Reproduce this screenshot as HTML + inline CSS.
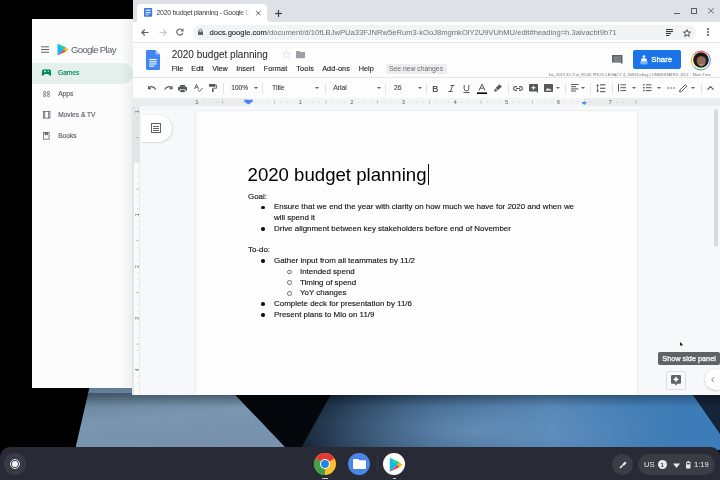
<!DOCTYPE html>
<html><head><meta charset="utf-8">
<style>
*{margin:0;padding:0;box-sizing:border-box}
html,body{width:720px;height:480px;overflow:hidden;background:#000;will-change:transform;font-family:"Liberation Sans",sans-serif}
.a{position:absolute}
.t{position:absolute;white-space:nowrap;line-height:1}
.ic{position:absolute;overflow:visible}
.doc{position:absolute;left:248px;top:191.6px;font-size:7.95px;line-height:10.75px;color:#111;white-space:nowrap;-webkit-text-stroke:0.12px #111}
.doc div{height:10.75px;position:relative}
.b1{padding-left:26px}
.b1:before{content:"";position:absolute;left:13.4px;top:3.3px;width:3.6px;height:3.6px;border-radius:50%;background:#111}
.b2{padding-left:52px}
.b2:before{content:"";position:absolute;left:39.3px;top:2.9px;width:2.5px;height:2.5px;border-radius:50%;border:0.5px solid #777}
.menu{position:absolute;top:64.6px;font-size:7.25px;color:#202124;white-space:nowrap;line-height:1;-webkit-text-stroke:0.12px #202124}
.tb{position:absolute;top:84.5px;font-size:6.5px;color:#3c4043;white-space:nowrap;line-height:1;-webkit-text-stroke:0.1px #3c4043}
.sep{position:absolute;top:83px;width:1px;height:11px;background:#e3e5e8}
.arr{position:absolute;top:87px;width:0;height:0;border-left:2px solid transparent;border-right:2px solid transparent;border-top:2.2px solid #5f6368}
</style></head><body>
<!-- wallpaper -->
<svg class="a" style="left:0;top:0" width="720" height="480" viewBox="0 0 720 480">
  <defs>
    <linearGradient id="wb" x1="0" y1="0" x2="1" y2="0">
      <stop offset="0" stop-color="#0f1c2c"/>
      <stop offset="0.3" stop-color="#2e5378"/>
      <stop offset="0.6" stop-color="#4a7eb0"/>
      <stop offset="1" stop-color="#3b7cba"/>
    </linearGradient>
    <radialGradient id="spot" cx="470" cy="430" r="150" gradientUnits="userSpaceOnUse" gradientTransform="translate(470 430) scale(1.3 0.35) translate(-470 -430)">
      <stop offset="0" stop-color="#86acd2" stop-opacity="0.55"/>
      <stop offset="1" stop-color="#86acd2" stop-opacity="0"/>
    </radialGradient>
    <linearGradient id="topsh" x1="0" y1="0" x2="0" y2="1">
      <stop offset="0" stop-color="#000" stop-opacity="0.35"/>
      <stop offset="1" stop-color="#000" stop-opacity="0"/>
    </linearGradient>
    <linearGradient id="lb" x1="0" y1="0" x2="0.3" y2="1">
      <stop offset="0" stop-color="#5d7892"/>
      <stop offset="0.55" stop-color="#7995b0"/>
      <stop offset="1" stop-color="#7892ac"/>
    </linearGradient>
  </defs>
  <rect x="0" y="0" width="720" height="480" fill="#000"/>
  <polygon points="336,385 720,385 720,450 298,450" fill="url(#wb)"/>
  <polygon points="336,385 720,385 720,450 298,450" fill="url(#spot)"/>
  <polygon points="90,385 226,385 288,450 75,450" fill="url(#lb)"/>
  <polygon points="226,385 336,385 300,450 288,450" fill="#04070b"/>
  <polygon points="686,385 720,385 720,434" fill="#15243a"/>
  <rect x="0" y="393" width="720" height="14" fill="url(#topsh)"/>
</svg>

<!-- Google Play window -->
<div class="a" style="left:32px;top:19px;width:101px;height:368.5px;background:#fcfcfd"></div>
<div class="a" style="left:32px;top:62.5px;width:101px;height:21px;background:#e4f0eb;border-radius:0 11px 11px 0"></div>
<svg class="ic" style="left:41px;top:46px" width="8" height="7" viewBox="0 0 8 7"><rect x="0" y="0.3" width="8" height="1" fill="#5f6368"/><rect x="0" y="3" width="8" height="1" fill="#5f6368"/><rect x="0" y="5.7" width="8" height="1" fill="#5f6368"/></svg>
<svg class="ic" style="left:57px;top:43px" width="12" height="13" viewBox="0 0 12 13">
  <polygon points="0.5,0.5 7,6.5 0.5,12.5" fill="#12b8ee"/>
  <polygon points="0.5,0.5 7,6.5 9,4.6" fill="#1ed27c"/>
  <polygon points="0.5,12.5 7,6.5 9,8.4" fill="#ea4335"/>
  <polygon points="9,4.6 11.5,6.5 9,8.4 7,6.5" fill="#fbbc04"/>
</svg>
<div class="t" style="left:71px;top:44.6px;font-size:9.6px;color:#5f6368;letter-spacing:-0.68px">Google Play</div>
<svg class="ic" style="left:42px;top:68.5px" width="9" height="7" viewBox="0 0 9 7"><path d="M1.5,0.5 h6 a1.5,1.5 0 0 1 1.4,1.3 l0.3,4 a0.9,0.9 0 0 1 -1.5,0.7 l-1.5,-1.5 h-3.4 l-1.5,1.5 a0.9,0.9 0 0 1 -1.5,-0.7 l0.3,-4 a1.5,1.5 0 0 1 1.4,-1.3z" fill="#01875f"/><rect x="2" y="2" width="2" height="0.8" fill="#e4f0eb"/><rect x="2.6" y="1.4" width="0.8" height="2" fill="#e4f0eb"/><circle cx="6.3" cy="2.4" r="0.6" fill="#e4f0eb"/></svg>
<div class="t" style="left:58px;top:70px;font-size:6.6px;color:#01875f;-webkit-text-stroke:0.15px #01875f">Games</div>
<svg class="ic" style="left:42.9px;top:90.9px" width="7" height="6" viewBox="0 0 7 6" fill="none" stroke="#5f6368" stroke-width="0.8"><circle cx="1.6" cy="1.5" r="1.15"/><circle cx="5.4" cy="1.5" r="1.15"/><circle cx="1.6" cy="4.5" r="1.15"/><circle cx="5.4" cy="4.5" r="1.15"/></svg>
<div class="t" style="left:58.2px;top:91px;font-size:6.6px;color:#5f6368;-webkit-text-stroke:0.15px #5f6368">Apps</div>
<svg class="ic" style="left:42.5px;top:110.9px" width="7.3" height="7.5" viewBox="0 0 7.3 7.5" fill="none" stroke="#5f6368" stroke-width="0.8"><rect x="0.4" y="0.4" width="6.5" height="6.7"/><line x1="1.7" y1="0.4" x2="1.7" y2="7.1"/><line x1="5.6" y1="0.4" x2="5.6" y2="7.1"/></svg>
<div class="t" style="left:58.2px;top:112px;font-size:6.6px;color:#5f6368;-webkit-text-stroke:0.15px #5f6368">Movies &amp; TV</div>
<svg class="ic" style="left:43.3px;top:132px" width="6.5" height="7.6" viewBox="0 0 6.5 7.6" fill="none" stroke="#5f6368" stroke-width="0.8"><rect x="0.4" y="0.4" width="5.7" height="6.8"/><path d="M2,0.4 v2.6 l1.25,-0.7 l1.25,0.7 v-2.6" fill="#5f6368"/></svg>
<div class="t" style="left:58.2px;top:133px;font-size:6.6px;color:#5f6368;-webkit-text-stroke:0.15px #5f6368">Books</div>
<!-- shadow of chrome on play -->
<div class="a" style="left:121px;top:19px;width:12px;height:368.5px;background:linear-gradient(to right,rgba(0,0,0,0),rgba(0,0,0,0.06))"></div>

<!-- Chrome window -->
<div class="a" style="left:133px;top:0;width:587px;height:395px;background:#dee1e6"></div>
<!-- tab -->
<div class="a" style="left:137px;top:17px;width:134px;height:5px;background:#fff"></div>
<div class="a" style="left:267px;top:13px;width:8px;height:9px;background:#dee1e6;border-radius:0 0 0 4px"></div>
<div class="a" style="left:137px;top:4px;width:130px;height:18.5px;background:#fff;border-radius:4px 4px 0 0"></div>
<svg class="ic" style="left:144px;top:8.3px" width="8.2" height="8.8" viewBox="0 0 8.2 8.8"><rect x="0" y="0" width="8.2" height="8.8" rx="0.8" fill="#3d7be6"/><rect x="1.6" y="1.6" width="5" height="1.3" fill="#dfe9fb"/><rect x="1.6" y="4" width="5" height="1.3" fill="#dfe9fb"/><rect x="1.6" y="6.3" width="3" height="0.9" fill="#dfe9fb"/></svg>
<div class="t" style="left:156.5px;top:9.4px;font-size:7px;color:#3c4043;letter-spacing:-0.3px;width:95px;overflow:hidden">2020 budget planning - Google Docs</div>
<div class="a" style="left:240px;top:6px;width:13px;height:13px;background:linear-gradient(to right,rgba(255,255,255,0),#fff 80%)"></div>
<svg class="ic" style="left:256px;top:11px" width="4.6" height="4.4" viewBox="0 0 4.6 4.4" stroke="#4a4e52" stroke-width="0.9"><line x1="0.2" y1="0.2" x2="4.4" y2="4.2"/><line x1="4.4" y1="0.2" x2="0.2" y2="4.2"/></svg>
<svg class="ic" style="left:275px;top:10px" width="7" height="7" viewBox="0 0 7 7" stroke="#3c4043" stroke-width="1.2"><line x1="3.5" y1="0" x2="3.5" y2="7"/><line x1="0" y1="3.5" x2="7" y2="3.5"/></svg>
<!-- window controls -->
<div class="a" style="left:674px;top:13.2px;width:6px;height:1px;background:#5a5e62"></div>
<div class="a" style="left:691.2px;top:8px;width:5.8px;height:6px;border:1px solid #5a5e62;border-radius:0.5px"></div>
<svg class="ic" style="left:708.3px;top:8.2px" width="6" height="5.6" viewBox="0 0 6 5.6" stroke="#5a5e62" stroke-width="0.9"><line x1="0.2" y1="0.2" x2="5.8" y2="5.4"/><line x1="5.8" y1="0.2" x2="0.2" y2="5.4"/></svg>
<!-- toolbar -->
<div class="a" style="left:133px;top:21.6px;width:587px;height:21px;background:#fff;border-bottom:1px solid #e3e5e8"></div>
<svg class="ic" style="left:141px;top:28.5px" width="8" height="7" viewBox="0 0 8 7" fill="none" stroke="#5f6368" stroke-width="1.1"><line x1="0.8" y1="3.5" x2="7.5" y2="3.5"/><polyline points="3.8,0.5 0.8,3.5 3.8,6.5"/></svg>
<svg class="ic" style="left:158.5px;top:28.5px" width="8" height="7" viewBox="0 0 8 7" fill="none" stroke="#c4c7cb" stroke-width="1.1"><line x1="0.5" y1="3.5" x2="7.2" y2="3.5"/><polyline points="4.2,0.5 7.2,3.5 4.2,6.5"/></svg>
<svg class="ic" style="left:175.5px;top:28px" width="8" height="8" viewBox="0 0 8 8" fill="none" stroke="#5f6368" stroke-width="1.1"><path d="M6.6,2.6 A3.1,3.1 0 1 0 6.8,5"/><polygon points="7.5,0.5 7.5,3.4 4.6,3.4" fill="#5f6368" stroke="none"/></svg>
<div class="a" style="left:192.5px;top:24.5px;width:503.5px;height:15px;background:#f1f3f4;border-radius:7.5px"></div>
<svg class="ic" style="left:198px;top:28.5px" width="5" height="6" viewBox="0 0 5 6"><rect x="0" y="2.5" width="5" height="3.5" rx="0.5" fill="#5f6368"/><path d="M1,2.6 V1.8 a1.5,1.5 0 0 1 3,0 V2.6" fill="none" stroke="#5f6368" stroke-width="0.9"/></svg>
<div class="t" style="left:209.5px;top:28.8px;font-size:7.6px;color:#202124;-webkit-text-stroke:0.1px #202124">docs.google.com<span style="color:#6f7378;-webkit-text-stroke:0">/document/d/10fLBJwPUa33FJNRw5eRum3-kOoJ8mgmkOlY2U9VUhMU/edit#heading=h.3aivacbt9b71</span></div>
<svg class="ic" style="left:665.5px;top:29px" width="7" height="7" viewBox="0 0 7 7" fill="#3c4043"><rect x="0" y="0" width="7" height="1.1"/><rect x="0" y="2" width="7" height="1.1"/><rect x="0" y="4" width="5" height="1.1"/><rect x="0" y="6" width="3.5" height="1"/></svg>
<svg class="ic" style="left:682.5px;top:28.5px" width="8" height="8" viewBox="0 0 8 8" fill="none" stroke="#3c4043" stroke-width="0.9"><polygon points="4,0.6 5,3 7.6,3.1 5.6,4.8 6.3,7.4 4,6 1.7,7.4 2.4,4.8 0.4,3.1 3,3"/></svg>
<svg class="ic" style="left:707px;top:28px" width="2" height="8" viewBox="0 0 2 8" fill="#3c4043"><circle cx="1" cy="1" r="0.9"/><circle cx="1" cy="4" r="0.9"/><circle cx="1" cy="7" r="0.9"/></svg>

<!-- docs header -->
<div class="a" style="left:133px;top:42.6px;width:587px;height:35.2px;background:#fdfdfe;border-bottom:1px solid #e3e5e8"></div>
<svg class="ic" style="left:145.5px;top:49.5px" width="14" height="20" viewBox="0 0 14 20"><path d="M1.3,0 H9.5 L14,4.5 V18.7 a1.3,1.3 0 0 1 -1.3,1.3 H1.3 A1.3,1.3 0 0 1 0,18.7 V1.3 A1.3,1.3 0 0 1 1.3,0z" fill="#4285f4"/><path d="M9.5,0 V4.5 H14z" fill="#a1c2fa"/><rect x="3.2" y="9" width="7.6" height="1.1" fill="#fff"/><rect x="3.2" y="11.2" width="7.6" height="1.1" fill="#fff"/><rect x="3.2" y="13.4" width="7.6" height="1.1" fill="#fff"/><rect x="3.2" y="15.6" width="5" height="1.1" fill="#fff"/></svg>
<div class="t" style="left:171.7px;top:49.8px;font-size:10px;color:#202124">2020 budget planning</div>
<svg class="ic" style="left:281.5px;top:50px" width="8.5" height="8.5" viewBox="0 0 8 8" fill="none" stroke="#e0e2e5" stroke-width="0.8"><polygon points="4,0.6 5,3 7.6,3.1 5.6,4.8 6.3,7.4 4,6 1.7,7.4 2.4,4.8 0.4,3.1 3,3"/></svg>
<svg class="ic" style="left:296.3px;top:50.8px" width="9" height="7.2" viewBox="0 0 9 7.2"><path d="M0.8,0 H3.5 L4.4,0.9 H8.2 A0.8,0.8 0 0 1 9,1.7 V6.4 A0.8,0.8 0 0 1 8.2,7.2 H0.8 A0.8,0.8 0 0 1 0,6.4 V0.8 A0.8,0.8 0 0 1 0.8,0z" fill="#9aa0a6"/></svg>
<div class="menu" style="left:171.7px">File</div>
<div class="menu" style="left:191.3px">Edit</div>
<div class="menu" style="left:212.2px">View</div>
<div class="menu" style="left:236.3px">Insert</div>
<div class="menu" style="left:263.7px;letter-spacing:0.1px">Format</div>
<div class="menu" style="left:296.3px;letter-spacing:0.15px">Tools</div>
<div class="menu" style="left:322.2px;letter-spacing:0.1px">Add-ons</div>
<div class="menu" style="left:358.8px">Help</div>
<div class="a" style="left:386px;top:64px;width:60.5px;height:10px;background:#ededee;border-radius:1px"></div>
<div class="t" style="left:389px;top:66px;font-size:6.8px;color:#6b6f73">See new changes</div>
<!-- right header -->
<svg class="ic" style="left:611.7px;top:54.5px" width="10.5" height="9.5" viewBox="0 0 10.5 9.5"><path d="M0,0 H10.5 V9.5 L8.5,7.5 H0z" fill="#5f6368"/><rect x="1.5" y="1.6" width="7.5" height="1" fill="#fff" opacity="0.35"/><rect x="1.5" y="3.4" width="7.5" height="1" fill="#fff" opacity="0.35"/><rect x="1.5" y="5.2" width="7.5" height="1" fill="#fff" opacity="0.35"/></svg>
<div class="a" style="left:633.3px;top:50px;width:47.5px;height:19.2px;background:#1a73e8;border-radius:2px"></div>
<svg class="ic" style="left:640px;top:54.8px" width="8" height="10" viewBox="0 0 8 10"><circle cx="3.9" cy="1.5" r="1.3" fill="#fff"/><path d="M1,6.6 V4.8 a1.6,1.6 0 0 1 1.6,-1.6 h2.6 a1.6,1.6 0 0 1 1.6,1.6 V6.6z" fill="#fff"/><path d="M0.2,6.4 h7.4 v1.8 a1.3,1.3 0 0 1 -1.3,1.3 h-4.8 a1.3,1.3 0 0 1 -1.3,-1.3z" fill="#fff" opacity="0.45"/></svg>
<div class="t" style="left:651.3px;top:55.7px;font-size:7.8px;color:#fff;-webkit-text-stroke:0.3px #fff">Share</div>
<svg class="ic" style="left:689.5px;top:48.8px" width="22" height="22" viewBox="0 0 22 22">
  <path d="M3.2,6 A9.9,9.9 0 0 1 18.8,6" stroke="#ea4335" stroke-width="1" fill="none"/>
  <path d="M18.8,6 A9.9,9.9 0 0 1 15.5,19.8" stroke="#4285f4" stroke-width="1" fill="none"/>
  <path d="M15.5,19.8 A9.9,9.9 0 0 1 3.5,17.5" stroke="#34a853" stroke-width="1" fill="none"/>
  <path d="M3.5,17.5 A9.9,9.9 0 0 1 3.2,6" stroke="#fbbc04" stroke-width="1" fill="none"/>
  <circle cx="11" cy="11" r="7.8" fill="#221a17"/>
  <ellipse cx="11.3" cy="12" rx="4.6" ry="5.4" fill="#8e6a58"/>
  <path d="M6,9.5 Q6.2,4.5 11,4.3 Q16,4.5 16.2,9.5 Q14.5,7 11,7.2 Q7.5,7 6,9.5z" fill="#1a1412"/>
  <ellipse cx="11.5" cy="15.5" rx="2" ry="0.8" fill="#d8b8a8" opacity="0.6"/>
</svg>
<div class="t" style="left:548.8px;top:72.5px;font-size:4px;color:#70757a;letter-spacing:0.03px">kix_2019.42-Tue_RC06 PROD LEGACY 4_3081Debug | UNMIGRATED J2CL · Main Tree</div>

<!-- docs toolbar -->
<div class="a" style="left:133px;top:78px;width:587px;height:20px;background:#fdfdfe"></div>
<svg class="ic" style="left:148px;top:84.5px" width="8.5" height="5.5" viewBox="0 0 8.5 5.5" fill="none" stroke="#54585d" stroke-width="1.2"><path d="M1.2,2.5 Q4.5,0 8,4.5"/><polygon points="0,0.5 0,4.2 3.4,4.2" fill="#54585d" stroke="none"/></svg>
<svg class="ic" style="left:163.5px;top:84.5px" width="8.5" height="5.5" viewBox="0 0 8.5 5.5" fill="none" stroke="#54585d" stroke-width="1.2"><path d="M7.3,2.5 Q4,0 0.5,4.5"/><polygon points="8.5,0.5 8.5,4.2 5.1,4.2" fill="#54585d" stroke="none"/></svg>
<svg class="ic" style="left:178px;top:84.5px" width="9" height="7.5" viewBox="0 0 9 7.5"><rect x="2" y="0" width="5" height="1.8" fill="#54585d"/><rect x="0" y="1.8" width="9" height="3.9" rx="0.8" fill="#54585d"/><rect x="2" y="4.4" width="5" height="3.1" fill="#54585d" stroke="#fdfdfe" stroke-width="0.6"/></svg>
<svg class="ic" style="left:193.5px;top:84.2px" width="9" height="8" viewBox="0 0 9 8" fill="none" stroke="#54585d" stroke-width="0.9"><path d="M0.5,5 L2.5,0.3 L4.5,5 M1.3,3.3 H3.7"/><path d="M3.8,6 L5.5,7.5 L8.5,4"/></svg>
<svg class="ic" style="left:209px;top:84.2px" width="8" height="8" viewBox="0 0 8 8" fill="#54585d"><rect x="0" y="0" width="6.5" height="2.8" rx="0.5"/><path d="M6.5,1.2 H7.6 V4.2 H3.8 V5" fill="none" stroke="#54585d" stroke-width="0.9"/><rect x="3" y="4.8" width="1.6" height="3.2"/></svg>
<div class="sep" style="left:222.5px"></div>
<div class="tb" style="left:231.3px">100%</div>
<div class="arr" style="left:254px"></div>
<div class="sep" style="left:262.4px"></div>
<div class="tb" style="left:272px;font-size:6.8px">Title</div>
<div class="arr" style="left:315px"></div>
<div class="sep" style="left:324.9px"></div>
<div class="tb" style="left:333.2px;font-size:6.8px">Arial</div>
<div class="arr" style="left:377px"></div>
<div class="sep" style="left:385.3px"></div>
<div class="tb" style="left:393.9px;font-size:6.8px">26</div>
<div class="arr" style="left:417.5px"></div>
<div class="sep" style="left:425.8px"></div>
<div class="t" style="left:432.3px;top:84.7px;font-size:8.5px;font-weight:bold;color:#54585d">B</div>
<svg class="ic" style="left:447.5px;top:84.5px" width="7" height="7" viewBox="0 0 7 7" fill="none" stroke="#54585d" stroke-width="1"><path d="M2.5,0.5 H6.5 M0.5,6.5 H4.5 M4.6,0.5 L2.4,6.5"/></svg>
<svg class="ic" style="left:462.5px;top:84.5px" width="7" height="8" viewBox="0 0 7 8" fill="none" stroke="#54585d" stroke-width="1"><path d="M1.2,0 V3.6 a2.3,2.3 0 0 0 4.6,0 V0"/><line x1="0.5" y1="7.5" x2="6.5" y2="7.5"/></svg>
<svg class="ic" style="left:477px;top:84.3px" width="10" height="10" viewBox="0 0 10 10" fill="none" stroke="#54585d" stroke-width="1"><path d="M2,6.5 L5,0.2 L8,6.5 M3.2,4.2 H6.8"/><rect x="0" y="8.4" width="10" height="1.6" fill="#000" stroke="none"/></svg>
<svg class="ic" style="left:494px;top:84px" width="8" height="8" viewBox="0 0 8 8" fill="#54585d"><path d="M5.5,0.2 L7.8,2.5 L4,6.3 L1.7,4z"/><path d="M1.3,4.6 L3.4,6.7 L2.2,7.4 L0.2,7.6 L0.6,5.6z"/></svg>
<div class="sep" style="left:508.2px"></div>
<svg class="ic" style="left:513px;top:85.5px" width="10" height="5" viewBox="0 0 10 5" fill="none" stroke="#54585d" stroke-width="1.1"><path d="M4,0.6 H2.5 a1.9,1.9 0 0 0 0,3.8 H4 M6,0.6 H7.5 a1.9,1.9 0 0 1 0,3.8 H6 M3,2.5 H7"/></svg>
<svg class="ic" style="left:528.8px;top:83.8px" width="9" height="9" viewBox="0 0 9 9"><path d="M0.8,0 H8.2 A0.8,0.8 0 0 1 9,0.8 V9 L7.5,7.5 H0.8 A0.8,0.8 0 0 1 0,6.7 V0.8 A0.8,0.8 0 0 1 0.8,0z" fill="#54585d"/><path d="M4.5,1.7 V5.8 M2.4,3.75 H6.6" stroke="#fff" stroke-width="1.1"/></svg>
<svg class="ic" style="left:543.7px;top:83.8px" width="9" height="8" viewBox="0 0 9 8"><rect x="0" y="0" width="9" height="8" rx="0.7" fill="#54585d"/><polygon points="1.5,6.5 3.5,4 5,5.5 6,4.5 7.5,6.5" fill="#fdfdfe"/></svg>
<div class="arr" style="left:555.5px"></div>
<div class="sep" style="left:564.5px"></div>
<svg class="ic" style="left:570.8px;top:84.3px" width="7.5" height="7.5" viewBox="0 0 7.5 7.5" fill="#54585d"><rect x="0" y="0" width="7.5" height="1"/><rect x="0" y="2.2" width="5" height="1"/><rect x="0" y="4.4" width="7.5" height="1"/><rect x="0" y="6.5" width="5" height="1"/></svg>
<div class="arr" style="left:581px"></div>
<div class="sep" style="left:590.3px"></div>
<svg class="ic" style="left:596.3px;top:83.8px" width="9.5" height="8.5" viewBox="0 0 9.5 8.5" fill="#54585d"><rect x="4" y="0.3" width="5.5" height="1.1"/><rect x="4" y="3.7" width="5.5" height="1.1"/><rect x="4" y="7.1" width="5.5" height="1.1"/><polygon points="0.2,2 1.6,0 3,2"/><polygon points="0.2,6.5 1.6,8.5 3,6.5"/><rect x="1.2" y="1.5" width="0.8" height="5.5"/></svg>
<div class="sep" style="left:611.7px"></div>
<svg class="ic" style="left:618px;top:84px" width="8" height="7.5" viewBox="0 0 8 7.5" fill="#54585d"><rect x="2.5" y="0.3" width="5.5" height="1"/><rect x="2.5" y="3.2" width="5.5" height="1"/><rect x="2.5" y="6.1" width="5.5" height="1"/><rect x="0" y="0" width="1" height="7.5"/></svg>
<div class="arr" style="left:632px"></div>
<svg class="ic" style="left:642.8px;top:84px" width="8.5" height="7.5" viewBox="0 0 8.5 7.5" fill="#54585d"><rect x="2.8" y="0.3" width="5.7" height="1"/><rect x="2.8" y="3.2" width="5.7" height="1"/><rect x="2.8" y="6.1" width="5.7" height="1"/><rect x="0" y="0.1" width="1.5" height="1.4"/><rect x="0" y="3" width="1.5" height="1.4"/><rect x="0" y="5.9" width="1.5" height="1.4"/></svg>
<div class="arr" style="left:657px"></div>
<svg class="ic" style="left:667.3px;top:87.3px" width="8" height="2" viewBox="0 0 8 2" fill="#54585d"><circle cx="1" cy="1" r="0.8"/><circle cx="4" cy="1" r="0.8"/><circle cx="7" cy="1" r="0.8"/></svg>
<svg class="ic" style="left:678.8px;top:83.6px" width="8.5" height="8.5" viewBox="0 0 8.5 8.5" fill="none" stroke="#54585d" stroke-width="1"><path d="M6.3,0.7 L7.8,2.2 L2.4,7.6 L0.6,7.9 L0.9,6.1z"/></svg>
<div class="arr" style="left:690.5px"></div>
<div class="sep" style="left:700.5px"></div>
<svg class="ic" style="left:706.6px;top:86px" width="7" height="4" viewBox="0 0 7 4" fill="none" stroke="#54585d" stroke-width="1.2"><polyline points="0.5,3.6 3.5,0.6 6.5,3.6"/></svg>

<!-- ruler -->
<div class="a" style="left:133px;top:98px;width:587px;height:8px;background:#eaecee"></div>
<div class="a" style="left:248px;top:98px;width:336px;height:8px;background:#f3f4f5"></div>
<svg class="ic" style="left:133px;top:98px" width="587" height="8" viewBox="0 0 587 8">
<text x="63.85" y="6.2" font-size="6" text-anchor="middle" fill="#5f6368" font-family="Liberation Sans">1</text>
<rect x="69.96" y="3.7" width="0.7" height="0.7" fill="#a0a4a8"/>
<rect x="76.41" y="3.7" width="0.7" height="0.7" fill="#a0a4a8"/>
<rect x="82.87" y="3.7" width="0.7" height="0.7" fill="#a0a4a8"/>
<rect x="89.33" y="2.5" width="0.7" height="3" fill="#a0a4a8"/>
<rect x="95.78" y="3.7" width="0.7" height="0.7" fill="#a0a4a8"/>
<rect x="102.24" y="3.7" width="0.7" height="0.7" fill="#a0a4a8"/>
<rect x="108.69" y="3.7" width="0.7" height="0.7" fill="#a0a4a8"/>
<rect x="121.61" y="3.7" width="0.7" height="0.7" fill="#a0a4a8"/>
<rect x="128.06" y="3.7" width="0.7" height="0.7" fill="#a0a4a8"/>
<rect x="134.52" y="3.7" width="0.7" height="0.7" fill="#a0a4a8"/>
<rect x="140.97" y="2.5" width="0.7" height="3" fill="#a0a4a8"/>
<rect x="147.43" y="3.7" width="0.7" height="0.7" fill="#a0a4a8"/>
<rect x="153.89" y="3.7" width="0.7" height="0.7" fill="#a0a4a8"/>
<rect x="160.34" y="3.7" width="0.7" height="0.7" fill="#a0a4a8"/>
<text x="167.15" y="6.2" font-size="6" text-anchor="middle" fill="#5f6368" font-family="Liberation Sans">1</text>
<rect x="173.26" y="3.7" width="0.7" height="0.7" fill="#a0a4a8"/>
<rect x="179.71" y="3.7" width="0.7" height="0.7" fill="#a0a4a8"/>
<rect x="186.17" y="3.7" width="0.7" height="0.7" fill="#a0a4a8"/>
<rect x="192.63" y="2.5" width="0.7" height="3" fill="#a0a4a8"/>
<rect x="199.08" y="3.7" width="0.7" height="0.7" fill="#a0a4a8"/>
<rect x="205.54" y="3.7" width="0.7" height="0.7" fill="#a0a4a8"/>
<rect x="211.99" y="3.7" width="0.7" height="0.7" fill="#a0a4a8"/>
<text x="218.80" y="6.2" font-size="6" text-anchor="middle" fill="#5f6368" font-family="Liberation Sans">2</text>
<rect x="224.91" y="3.7" width="0.7" height="0.7" fill="#a0a4a8"/>
<rect x="231.36" y="3.7" width="0.7" height="0.7" fill="#a0a4a8"/>
<rect x="237.82" y="3.7" width="0.7" height="0.7" fill="#a0a4a8"/>
<rect x="244.28" y="2.5" width="0.7" height="3" fill="#a0a4a8"/>
<rect x="250.73" y="3.7" width="0.7" height="0.7" fill="#a0a4a8"/>
<rect x="257.19" y="3.7" width="0.7" height="0.7" fill="#a0a4a8"/>
<rect x="263.64" y="3.7" width="0.7" height="0.7" fill="#a0a4a8"/>
<text x="270.45" y="6.2" font-size="6" text-anchor="middle" fill="#5f6368" font-family="Liberation Sans">3</text>
<rect x="276.56" y="3.7" width="0.7" height="0.7" fill="#a0a4a8"/>
<rect x="283.01" y="3.7" width="0.7" height="0.7" fill="#a0a4a8"/>
<rect x="289.47" y="3.7" width="0.7" height="0.7" fill="#a0a4a8"/>
<rect x="295.92" y="2.5" width="0.7" height="3" fill="#a0a4a8"/>
<rect x="302.38" y="3.7" width="0.7" height="0.7" fill="#a0a4a8"/>
<rect x="308.84" y="3.7" width="0.7" height="0.7" fill="#a0a4a8"/>
<rect x="315.29" y="3.7" width="0.7" height="0.7" fill="#a0a4a8"/>
<text x="322.10" y="6.2" font-size="6" text-anchor="middle" fill="#5f6368" font-family="Liberation Sans">4</text>
<rect x="328.21" y="3.7" width="0.7" height="0.7" fill="#a0a4a8"/>
<rect x="334.66" y="3.7" width="0.7" height="0.7" fill="#a0a4a8"/>
<rect x="341.12" y="3.7" width="0.7" height="0.7" fill="#a0a4a8"/>
<rect x="347.57" y="2.5" width="0.7" height="3" fill="#a0a4a8"/>
<rect x="354.03" y="3.7" width="0.7" height="0.7" fill="#a0a4a8"/>
<rect x="360.49" y="3.7" width="0.7" height="0.7" fill="#a0a4a8"/>
<rect x="366.94" y="3.7" width="0.7" height="0.7" fill="#a0a4a8"/>
<text x="373.75" y="6.2" font-size="6" text-anchor="middle" fill="#5f6368" font-family="Liberation Sans">5</text>
<rect x="379.86" y="3.7" width="0.7" height="0.7" fill="#a0a4a8"/>
<rect x="386.31" y="3.7" width="0.7" height="0.7" fill="#a0a4a8"/>
<rect x="392.77" y="3.7" width="0.7" height="0.7" fill="#a0a4a8"/>
<rect x="399.23" y="2.5" width="0.7" height="3" fill="#a0a4a8"/>
<rect x="405.68" y="3.7" width="0.7" height="0.7" fill="#a0a4a8"/>
<rect x="412.14" y="3.7" width="0.7" height="0.7" fill="#a0a4a8"/>
<rect x="418.59" y="3.7" width="0.7" height="0.7" fill="#a0a4a8"/>
<text x="425.40" y="6.2" font-size="6" text-anchor="middle" fill="#5f6368" font-family="Liberation Sans">6</text>
<rect x="431.51" y="3.7" width="0.7" height="0.7" fill="#a0a4a8"/>
<rect x="437.96" y="3.7" width="0.7" height="0.7" fill="#a0a4a8"/>
<rect x="444.42" y="3.7" width="0.7" height="0.7" fill="#a0a4a8"/>
<rect x="450.87" y="2.5" width="0.7" height="3" fill="#a0a4a8"/>
<rect x="457.33" y="3.7" width="0.7" height="0.7" fill="#a0a4a8"/>
<rect x="463.79" y="3.7" width="0.7" height="0.7" fill="#a0a4a8"/>
<rect x="470.24" y="3.7" width="0.7" height="0.7" fill="#a0a4a8"/>
<text x="477.05" y="6.2" font-size="6" text-anchor="middle" fill="#5f6368" font-family="Liberation Sans">7</text>
<rect x="483.16" y="3.7" width="0.7" height="0.7" fill="#a0a4a8"/>
<rect x="489.61" y="3.7" width="0.7" height="0.7" fill="#a0a4a8"/>
<rect x="496.07" y="3.7" width="0.7" height="0.7" fill="#a0a4a8"/>
<rect x="502.52" y="2.5" width="0.7" height="3" fill="#a0a4a8"/>
<path d="M111.20,1.8 h8.6 v1.6 l-4.3,3.2 l-4.3,-3.2z" fill="#4285f4"/>
<path d="M448.20,4 h6 l-3,3z" fill="#4285f4"/>
</svg>

<!-- canvas -->
<div class="a" style="left:133px;top:106px;width:587px;height:289px;background:#f7f8f9"></div>
<div class="a" style="left:133.7px;top:106px;width:6.6px;height:289px;background:#fbfbfc;border-right:1px solid #e6e8ea"></div>
<div class="a" style="left:132.2px;top:106px;width:1.6px;height:289px;background:#e3e4e6"></div>
<div class="a" style="left:133.7px;top:106px;width:6.6px;height:57.3px;background:#e4e6e8"></div>
<svg class="ic" style="left:133.7px;top:106px" width="7" height="288" viewBox="0 0 7 288">
<text transform="translate(4.9,5.65) rotate(-90)" font-size="5" text-anchor="middle" fill="#5f6368" font-family="Liberation Sans">1</text>
<rect x="3" y="11.76" width="0.7" height="0.7" fill="#a0a4a8"/>
<rect x="3" y="18.21" width="0.7" height="0.7" fill="#a0a4a8"/>
<rect x="3" y="24.67" width="0.7" height="0.7" fill="#a0a4a8"/>
<rect x="1.8" y="31.13" width="3" height="0.7" fill="#a0a4a8"/>
<rect x="3" y="37.58" width="0.7" height="0.7" fill="#a0a4a8"/>
<rect x="3" y="44.04" width="0.7" height="0.7" fill="#a0a4a8"/>
<rect x="3" y="50.49" width="0.7" height="0.7" fill="#a0a4a8"/>
<rect x="3" y="63.41" width="0.7" height="0.7" fill="#a0a4a8"/>
<rect x="3" y="69.86" width="0.7" height="0.7" fill="#a0a4a8"/>
<rect x="3" y="76.32" width="0.7" height="0.7" fill="#a0a4a8"/>
<rect x="1.8" y="82.78" width="3" height="0.7" fill="#a0a4a8"/>
<rect x="3" y="89.23" width="0.7" height="0.7" fill="#a0a4a8"/>
<rect x="3" y="95.69" width="0.7" height="0.7" fill="#a0a4a8"/>
<rect x="3" y="102.14" width="0.7" height="0.7" fill="#a0a4a8"/>
<text transform="translate(4.9,108.95) rotate(-90)" font-size="5" text-anchor="middle" fill="#5f6368" font-family="Liberation Sans">1</text>
<rect x="3" y="115.06" width="0.7" height="0.7" fill="#a0a4a8"/>
<rect x="3" y="121.51" width="0.7" height="0.7" fill="#a0a4a8"/>
<rect x="3" y="127.97" width="0.7" height="0.7" fill="#a0a4a8"/>
<rect x="1.8" y="134.43" width="3" height="0.7" fill="#a0a4a8"/>
<rect x="3" y="140.88" width="0.7" height="0.7" fill="#a0a4a8"/>
<rect x="3" y="147.34" width="0.7" height="0.7" fill="#a0a4a8"/>
<rect x="3" y="153.79" width="0.7" height="0.7" fill="#a0a4a8"/>
<text transform="translate(4.9,160.60) rotate(-90)" font-size="5" text-anchor="middle" fill="#5f6368" font-family="Liberation Sans">2</text>
<rect x="3" y="166.71" width="0.7" height="0.7" fill="#a0a4a8"/>
<rect x="3" y="173.16" width="0.7" height="0.7" fill="#a0a4a8"/>
<rect x="3" y="179.62" width="0.7" height="0.7" fill="#a0a4a8"/>
<rect x="1.8" y="186.08" width="3" height="0.7" fill="#a0a4a8"/>
<rect x="3" y="192.53" width="0.7" height="0.7" fill="#a0a4a8"/>
<rect x="3" y="198.99" width="0.7" height="0.7" fill="#a0a4a8"/>
<rect x="3" y="205.44" width="0.7" height="0.7" fill="#a0a4a8"/>
<text transform="translate(4.9,212.25) rotate(-90)" font-size="5" text-anchor="middle" fill="#5f6368" font-family="Liberation Sans">3</text>
<rect x="3" y="218.36" width="0.7" height="0.7" fill="#a0a4a8"/>
<rect x="3" y="224.81" width="0.7" height="0.7" fill="#a0a4a8"/>
<rect x="3" y="231.27" width="0.7" height="0.7" fill="#a0a4a8"/>
<rect x="1.8" y="237.73" width="3" height="0.7" fill="#a0a4a8"/>
<rect x="3" y="244.18" width="0.7" height="0.7" fill="#a0a4a8"/>
<rect x="3" y="250.64" width="0.7" height="0.7" fill="#a0a4a8"/>
<rect x="3" y="257.09" width="0.7" height="0.7" fill="#a0a4a8"/>
<text transform="translate(4.9,263.90) rotate(-90)" font-size="5" text-anchor="middle" fill="#5f6368" font-family="Liberation Sans">4</text>
<rect x="3" y="270.01" width="0.7" height="0.7" fill="#a0a4a8"/>
<rect x="3" y="276.46" width="0.7" height="0.7" fill="#a0a4a8"/>
<rect x="3" y="282.92" width="0.7" height="0.7" fill="#a0a4a8"/>
</svg>
<div class="a" style="left:196px;top:111px;width:440.5px;height:284px;background:#fdfdfe;box-shadow:0 0 1.5px rgba(0,0,0,0.18)"></div>
<div class="a" style="left:140.5px;top:115px;width:31px;height:26.5px;background:#fff;border-radius:0 13.25px 13.25px 0;box-shadow:0.5px 0.5px 1.5px rgba(0,0,0,0.2)"></div>
<svg class="ic" style="left:151px;top:123px" width="10" height="10" viewBox="0 0 10 10" shape-rendering="crispEdges"><rect x="0" y="0" width="10" height="1" fill="#5f6368"/><rect x="0" y="9" width="10" height="1" fill="#5f6368"/><rect x="0" y="0" width="1" height="10" fill="#5f6368"/><rect x="9" y="0" width="1" height="10" fill="#5f6368"/><rect x="2" y="3" width="6" height="1" fill="#5f6368"/><rect x="2" y="5" width="6" height="1" fill="#5f6368"/><rect x="2" y="7" width="6" height="1" fill="#5f6368"/></svg>
<!-- scrollbar -->
<div class="a" style="left:713.5px;top:108.5px;width:4.5px;height:138px;background:#d9dadc;border-radius:2.25px"></div>

<!-- doc content -->
<div class="t" style="left:247.6px;top:166.2px;font-size:18.6px;color:#000">2020 budget planning</div>
<div class="a" style="left:428px;top:163.5px;width:0.9px;height:21.5px;background:#111"></div>
<div class="doc">
  <div>Goal:</div>
  <div class="b1">Ensure that we end the year with clarity on how much we have for 2020 and when we</div>
  <div style="padding-left:26px">will spend it</div>
  <div class="b1">Drive alignment between key stakeholders before end of November</div>
  <div></div>
  <div>To-do:</div>
  <div class="b1">Gather input from all teammates by 11/2</div>
  <div class="b2">Intended spend</div>
  <div class="b2">Timing of spend</div>
  <div class="b2">YoY changes</div>
  <div class="b1">Complete deck for presentation by 11/6</div>
  <div class="b1">Present plans to Mio on 11/9</div>
</div>

<!-- bottom-right controls -->
<svg class="ic" style="left:679.5px;top:342px" width="3" height="4.5" viewBox="0 0 3 4.5"><polygon points="0,0 0,4 1,3 2,4.3 2.6,4 1.8,2.8 3,2.8" fill="#222"/></svg>
<div class="a" style="left:657.9px;top:352.2px;width:62.1px;height:12.5px;background:#5f6266;border-radius:2px"></div>
<div class="t" style="left:662.3px;top:355.3px;font-size:7.3px;color:#fff;-webkit-text-stroke:0.25px #fff">Show side panel</div>
<div class="a" style="left:665.5px;top:370.5px;width:20px;height:19.5px;background:#f8f9fa;border:1px solid #dcdee1;border-radius:1px"></div>
<svg class="ic" style="left:670.5px;top:375.3px" width="10" height="10.8" viewBox="0 0 10 10.8"><path d="M1,0 H9 A1,1 0 0 1 10,1 V7.8 A1,1 0 0 1 9,8.8 H6.2 L5,10.8 L3.8,8.8 H1 A1,1 0 0 1 0,7.8 V1 A1,1 0 0 1 1,0z" fill="#5f6368"/><path d="M5,1.3 Q5.4,3.9 8,4.4 Q5.4,4.9 5,7.5 Q4.6,4.9 2,4.4 Q4.6,3.9 5,1.3z" fill="#fff"/></svg>
<div class="a" style="left:704.5px;top:369.4px;width:22px;height:20.5px;background:#fff;border-radius:10.25px;box-shadow:0 0.5px 2px rgba(0,0,0,0.25)"></div>
<svg class="ic" style="left:711px;top:377px" width="3.5" height="5.5" viewBox="0 0 3.5 5.5" fill="none" stroke="#5f6368" stroke-width="0.9"><polyline points="3,0.4 0.7,2.75 3,5.1"/></svg>

<!-- shelf -->
<div class="a" style="left:0;top:447.2px;width:720px;height:40px;background:#282b36;border-radius:10px 9px 0 0"></div>
<div class="a" style="left:4.1px;top:453.4px;width:22px;height:22px;border-radius:50%;background:#383b45"></div>
<div class="a" style="left:10.1px;top:459.4px;width:10px;height:10px;border-radius:50%;border:0.7px solid #e8e8ea"></div>
<div class="a" style="left:12.1px;top:461.4px;width:6px;height:6px;border-radius:50%;background:#fff"></div>
<!-- chrome icon -->
<svg class="ic" style="left:313.7px;top:453.3px" width="22" height="22" viewBox="0 0 22 22">
  <circle cx="11" cy="11" r="11" fill="#fbc02d"/>
  <path d="M11,11 L1.47,5.5 A11,11 0 0 1 20.53,5.5z" fill="#e53935"/>
  <path d="M11,11 L1.47,5.5 A11,11 0 0 0 11,22z" fill="#43a047"/>
  <circle cx="11" cy="11" r="5" fill="#fff"/>
  <circle cx="11" cy="11" r="3.9" fill="#1e88e5"/>
</svg>
<div class="a" style="left:321.7px;top:477.5px;width:6px;height:1px;background:#c8c9cc"></div>
<!-- files icon -->
<div class="a" style="left:348px;top:453.3px;width:22px;height:22px;border-radius:50%;background:#4a86e8"></div>
<svg class="ic" style="left:352.5px;top:459px" width="13" height="10" viewBox="0 0 13 10"><path d="M1,0 H5 L6.3,1.3 H12 A1,1 0 0 1 13,2.3 V9 A1,1 0 0 1 12,10 H1 A1,1 0 0 1 0,9 V1 A1,1 0 0 1 1,0z" fill="#fff"/></svg>
<div class="a" style="left:376.8px;top:456px;width:1px;height:16px;background:#33363f"></div>
<!-- play icon -->
<div class="a" style="left:383px;top:453.3px;width:22px;height:22px;border-radius:50%;background:#fff"></div>
<svg class="ic" style="left:388.5px;top:456.6px" width="14.5" height="15.3" viewBox="0 0 12 13">
  <polygon points="0.5,0.5 7,6.5 0.5,12.5" fill="#12b8ee"/>
  <polygon points="0.5,0.5 7,6.5 9,4.6" fill="#1ed27c"/>
  <polygon points="0.5,12.5 7,6.5 9,8.4" fill="#ea4335"/>
  <polygon points="9,4.6 11.5,6.5 9,8.4 7,6.5" fill="#fbbc04"/>
</svg>
<div class="a" style="left:393px;top:477.5px;width:3px;height:1px;background:#c8c9cc"></div>
<!-- status -->
<div class="a" style="left:612px;top:454.2px;width:21px;height:21px;border-radius:50%;background:#3a3d46"></div>
<svg class="ic" style="left:618.5px;top:460.5px" width="8" height="8" viewBox="0 0 8 8"><path d="M6,0.4 L7.6,2 L4.6,5 L3,3.4z" fill="#e8eaed"/><path d="M2.7,3.9 L4.1,5.3 L1.2,7.6 L0.4,6.8z" fill="#e8eaed"/></svg>
<div class="a" style="left:637.5px;top:454.2px;width:77.5px;height:21px;border-radius:10.5px;background:#3a3d46"></div>
<div class="t" style="left:644px;top:461.3px;font-size:7.6px;color:#e8eaed">US</div>
<div class="a" style="left:658px;top:460.1px;width:9px;height:9px;border-radius:50%;background:#e8eaed"></div>
<div class="t" style="left:660.6px;top:461.5px;font-size:6.2px;font-weight:bold;color:#3a3d46">1</div>
<svg class="ic" style="left:673.3px;top:462.5px" width="7" height="5" viewBox="0 0 7 5"><polygon points="0,0.5 7,0.5 3.5,5" fill="#e8eaed"/></svg>
<svg class="ic" style="left:685.5px;top:461px" width="4.5" height="7.5" viewBox="0 0 4.5 7.5"><rect x="1.3" y="0" width="1.9" height="1" fill="#e8eaed"/><rect x="0" y="1" width="4.5" height="6.5" rx="0.4" fill="#e8eaed"/><rect x="0.8" y="1.8" width="2.9" height="1.6" fill="#3a3d46"/></svg>
<div class="t" style="left:694px;top:461.3px;font-size:7.6px;color:#e8eaed">1:19</div>
</body></html>
